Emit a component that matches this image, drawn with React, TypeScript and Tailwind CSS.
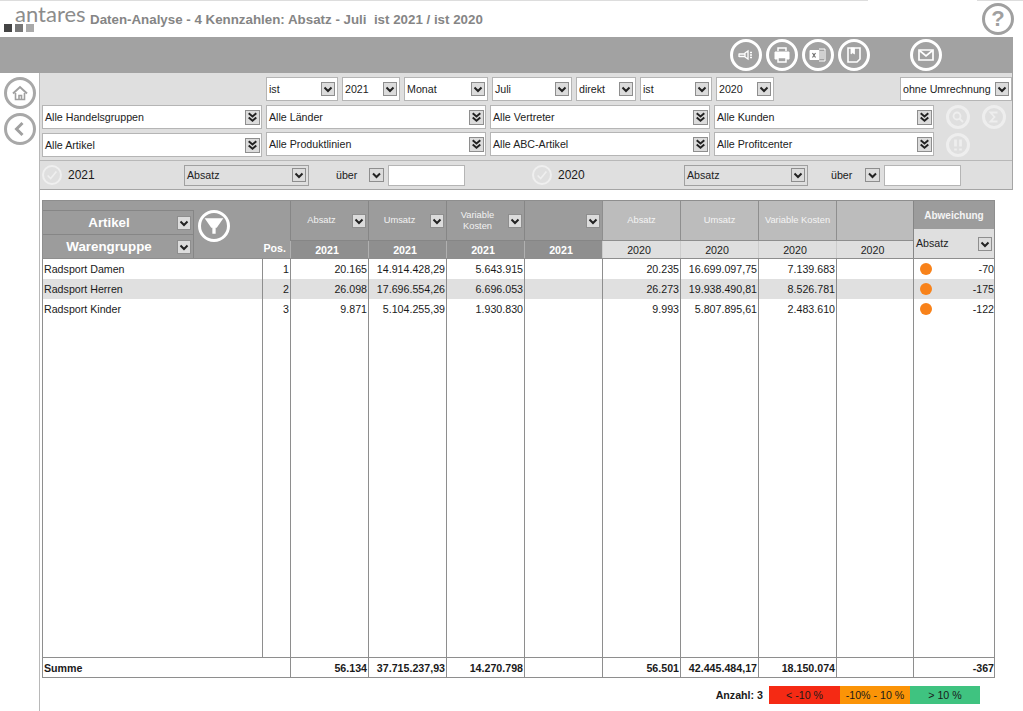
import React from 'react';

const COLS = 'grid grid-cols-[219px_28px_78px_78px_78px_78px_78px_78px_78px_77px_81px]';

const Chev = ({ double }: { double?: boolean }) => (
  <svg viewBox="0 0 12 12" className="w-full h-full">
    {double ? (
      <>
        <path d="M2.5 2 6 5 9.500 2" fill="none" stroke="#222" strokeWidth="1.800" />
        <path d="M2.500 6 6 9 9.500 6" fill="none" stroke="#222" strokeWidth="1.800" />
      </>
    ) : (
      <path d="M2.500 4.500 6 8 9.500 4.500" fill="none" stroke="#222" strokeWidth="2" />
    )}
  </svg>
);

const DropBtn = ({ double, cls }: { double?: boolean; cls?: string }) => (
  <div className={`shrink-0 border border-[#8e8e8e] bg-[#dcdcdc] ${double ? 'w-[15px] h-[15px]' : 'w-[14px] h-[14px]'} ${cls ?? ''}`}>
    <Chev double={double} />
  </div>
);

const Sel = ({ label, w, double, dim }: { label: string; w: string; double?: boolean; dim?: boolean }) => (
  <div className={`${w} shrink-0 flex items-center justify-between border pl-[2px] ${double ? 'pr-px' : 'pr-[2px]'} ${dim ? 'h-[21px] bg-[#dfdfdf] border-[#a0a0a0]' : 'h-[24px] bg-white border-[#b5b5b5]'}`}>
    <span className="text-[10.67px] text-[#222] whitespace-nowrap">{label}</span>
    <DropBtn double={double} />
  </div>
);

const Circle = ({ children, cls }: { children: React.ReactNode; cls: string }) => (
  <div className={`rounded-full flex items-center justify-center shrink-0 ${cls}`}>{children}</div>
);

const ToolBtn = ({ children, cls }: { children: React.ReactNode; cls?: string }) => (
  <Circle cls={`w-[32px] h-[32px] border-[3px] border-white ${cls ?? ''}`}>
    <svg viewBox="0 0 20 20" className="w-[20px] h-[20px]" fill="none" stroke="white">
      {children}
    </svg>
  </Circle>
);

const SideBtn = ({ children }: { children: React.ReactNode }) => (
  <Circle cls="w-[32px] h-[32px] border-[3px] border-[#a8a8a8]">
    <svg viewBox="0 0 20 20" className="w-[20px] h-[20px]" fill="none" stroke="#a0a0a0" strokeWidth="2">
      {children}
    </svg>
  </Circle>
);

const PaleBtn = ({ children }: { children: React.ReactNode }) => (
  <Circle cls="w-[24px] h-[24px] border-[3px] border-[#eeeeee]">
    <svg viewBox="0 0 16 16" className="w-[16px] h-[16px]" fill="none" stroke="#eeeeee" strokeWidth="1.800">
      {children}
    </svg>
  </Circle>
);

const CheckIcon = () => (
  <Circle cls="w-[20px] h-[20px] border-2 border-[#efefef]">
    <svg viewBox="0 0 16 16" className="w-[14px] h-[14px]" fill="none" stroke="#efefef" strokeWidth="1.800">
      <path d="M3 8.500 6.500 12 13 4" />
    </svg>
  </Circle>
);

const rows = [
  { name: 'Radsport Damen', pos: '1', a: '20.165', b: '14.914.428,29', c: '5.643.915', d: '20.235', e: '16.699.097,75', f: '7.139.683', dev: '-70' },
  { name: 'Radsport Herren', pos: '2', a: '26.098', b: '17.696.554,26', c: '6.696.053', d: '26.273', e: '19.938.490,81', f: '8.526.781', dev: '-175' },
  { name: 'Radsport Kinder', pos: '3', a: '9.871', b: '5.104.255,39', c: '1.930.830', d: '9.993', e: '5.807.895,61', f: '2.483.610', dev: '-122' },
];

const Cell = ({ children, cls }: { children?: React.ReactNode; cls?: string }) => (
  <div className={`border-l border-[#8e8e8e] text-right leading-[20px] whitespace-nowrap ${cls ?? 'pr-px'}`}>{children}</div>
);

const HeadCols = () => (
  <div className="flex flex-col">
    <div className="flex h-[40px]">
      {['Absatz', 'Umsatz', 'Variable Kosten', ''].map((t, i) => (
        <div key={i} className="w-[78px] flex items-center justify-end border-l border-b border-[#868686] bg-[#9c9c9c] pr-[2px]">
          <span className="flex-1 text-center text-[9.33px] leading-[11px] text-[#f2f2f2] px-[8px]">{t}</span>
          <DropBtn />
        </div>
      ))}
      {['Absatz', 'Umsatz', 'Variable Kosten', ''].map((t, i) => (
        <div key={i} className={`${i === 3 ? 'w-[77px]' : 'w-[78px]'} flex items-center justify-center border-l border-b border-[#8e8e8e] bg-[#bcbcbc] text-[9.33px] text-[#f4f4f4] whitespace-nowrap`}>
          {t}
        </div>
      ))}
    </div>
    <div className="flex h-[17px]">
      {[0, 1, 2, 3].map((i) => (
        <div key={i} className="w-[78px] flex items-center justify-center border-l border-[#b0b0b0] bg-[#8f8f8f] pr-[5px] text-[10.67px] font-bold text-white">
          2021
        </div>
      ))}
      {[0, 1, 2, 3].map((i) => (
        <div key={i} className={`${i === 3 ? 'w-[77px]' : 'w-[78px]'} flex items-center justify-center border-l border-[#cccccc] bg-[#dfdfdf] pr-[5px] text-[10.67px] text-[#222]`}>
          2020
        </div>
      ))}
    </div>
  </div>
);

export default function App() {
  return (
    <div className="w-[1023px] h-[711px] overflow-hidden bg-white flex flex-col text-[10.67px] text-[#1a1a1a] font-['Liberation_Sans',Arial,sans-serif]">
      {/* top hairline */}
      <div className="h-px flex shrink-0">
        <div className="w-[868px] bg-[#dddddd]" />
        <div className="w-[109px]" />
        <div className="flex-1 bg-[#dddddd]" />
      </div>

      {/* logo + title */}
      <div className="h-[36px] shrink-0 flex items-start">
        <div className="w-[90px] shrink-0 pl-[4px] pt-[3px] flex flex-col">
          <span className="pl-[11px] h-[20px] text-[22px] leading-[20px] text-[#8c8c8c] font-['Lato',sans-serif]">antares</span>
          <div className="flex gap-[3px]">
            <div className="w-[8px] h-[8px] bg-[#444444]" />
            <div className="w-[8px] h-[8px] bg-[#777777]" />
            <div className="w-[8px] h-[8px] bg-[#aaaaaa]" />
          </div>
        </div>
        <div className="flex-1 pt-[11px] text-[13.33px] leading-[15px] font-bold text-[#858585] whitespace-pre">
          Daten-Analyse - 4 Kennzahlen: Absatz - Juli  ist 2021 / ist 2020
        </div>
        <Circle cls="w-[32px] h-[32px] mt-[2px] mr-[9px] border-[3px] border-[#a0a0a0] text-[#a0a0a0] text-[22px] font-bold leading-none">?</Circle>
      </div>

      {/* toolbar */}
      <div className="h-[36px] shrink-0 mr-[10px] bg-[#a2a2a2] flex items-center pl-[730px] gap-[4px]">
        <ToolBtn>
          <path d="M3 9h6M3 11.500h6M3 8.500v3.500M9 8l3-2v8l-3-2zM14 7.500h2M14 10h2M14 12.500h2" strokeWidth="1.300" />
        </ToolBtn>
        <ToolBtn>
          <path d="M6 6V3h8v3" strokeWidth="1.500" />
          <path d="M3 7h14v7h-2.500v-2h-9v2H3z" fill="white" strokeWidth="1" />
          <path d="M6 12.500h8V17H6z" strokeWidth="1.500" />
        </ToolBtn>
        <ToolBtn>
          <path d="M2 5.500h9v9H2z" fill="white" strokeWidth="1" />
          <path d="M4.500 8l3 4.500M7.500 8l-3 4.500" stroke="#666" strokeWidth="1.100" />
          <path d="M11 4h6v12h-6M12 7h4M12 9h4M12 11h4M12 13h4" strokeWidth="1" />
        </ToolBtn>
        <ToolBtn>
          <path d="M4 3h12v11l-3 3H4z" strokeWidth="1.600" />
          <path d="M7 3h3.500v6L8.700 7.800 7 9z" fill="white" strokeWidth="0.800" />
        </ToolBtn>
        <ToolBtn cls="ml-[36px]">
          <path d="M3 5h14v10H3z" strokeWidth="1.700" />
          <path d="M3.500 5.500 10 11l6.500-5.500" strokeWidth="1.700" />
        </ToolBtn>
      </div>

      <div className="flex-1 flex min-h-0">
        {/* left rail */}
        <div className="w-[40px] shrink-0 border-r border-[#b8b8b8] pl-[4px] pt-[4px] flex flex-col gap-[4px]">
          <SideBtn>
            <path d="M3 10.500 10 4l7 6.500" />
            <path d="M5.500 10v6.500h9V10M9 16.500v-4h2.500v4" strokeWidth="1.600" />
          </SideBtn>
          <SideBtn>
            <path d="M12.500 4 6.500 10l6 6" strokeWidth="3" />
          </SideBtn>
        </div>

        <div className="flex-1 flex flex-col min-w-0">
          {/* filter panel */}
          <div className="mr-[10px] h-[117px] shrink-0 bg-[#dfdfdf] border-r border-b border-[#a5a5a5] flex flex-col">
            <div className="pt-[4px] pl-[226px] flex gap-[4px]">
              <Sel label="ist" w="w-[72px]" />
              <Sel label="2021" w="w-[58px]" />
              <Sel label="Monat" w="w-[84px]" />
              <Sel label="Juli" w="w-[80px]" />
              <Sel label="direkt" w="w-[60px]" />
              <Sel label="ist" w="w-[72px]" />
              <Sel label="2020" w="w-[58px]" />
              <div className="ml-[122px]">
                <Sel label="ohne Umrechnung" w="w-[112px]" />
              </div>
            </div>
            <div className="mt-[4px] pl-[2px] flex gap-[4px]">
              <Sel label="Alle Handelsgruppen" w="w-[220px]" double />
              <Sel label="Alle Länder" w="w-[220px]" double />
              <Sel label="Alle Vertreter" w="w-[220px]" double />
              <Sel label="Alle Kunden" w="w-[220px]" double />
              <div className="ml-[8px] flex gap-[12px]">
                <PaleBtn>
                  <circle cx="7" cy="7" r="3.500" />
                  <path d="M9.500 9.500 13 13" />
                </PaleBtn>
                <PaleBtn>
                  <path d="M11.500 3.500h-7L8.500 8l-4 4.500h7" />
                </PaleBtn>
              </div>
            </div>
            <div className="mt-[3px] pl-[2px] flex gap-[4px] h-[25px]">
              <div className="mt-px">
                <Sel label="Alle Artikel" w="w-[220px]" double />
              </div>
              <Sel label="Alle Produktlinien" w="w-[220px]" double />
              <Sel label="Alle ABC-Artikel" w="w-[220px]" double />
              <Sel label="Alle Profitcenter" w="w-[220px]" double />
              <div className="ml-[8px] mt-px">
                <PaleBtn>
                  <path d="M5.500 2.500v7M10.500 2.500v7" strokeWidth="2.800" />
                  <path d="M5.500 11.500v2M10.500 11.500v2" strokeWidth="2.600" />
                </PaleBtn>
              </div>
            </div>
            <div className="mt-[3px] flex-1 border-t border-[#b8b8b8] flex items-center pl-[2px]">
              <div className="w-[492px] flex items-center">
                <CheckIcon />
                <span className="ml-[6px] w-[116px] text-[12px]">2021</span>
                <Sel label="Absatz" w="w-[125px]" dim />
                <span className="ml-[27px] w-[33px]">über</span>
                <DropBtn cls="w-[15px]" />
                <div className="ml-[4px] w-[77px] h-[21px] bg-white border border-[#b5b5b5]" />
              </div>
              <div className="w-[478px] flex items-center ml-[-2px]">
                <CheckIcon />
                <span className="ml-[6px] w-[126px] text-[12px]">2020</span>
                <Sel label="Absatz" w="w-[124px]" dim />
                <span className="ml-[23px] w-[34px]">über</span>
                <DropBtn cls="w-[15px]" />
                <div className="ml-[4px] w-[77px] h-[21px] bg-white border border-[#b5b5b5]" />
              </div>
            </div>
          </div>

          {/* table */}
          <div className="ml-[2px] mt-[10px] w-[953px] h-[478px] shrink-0 border border-[#8e8e8e] flex flex-col">
            <div className="h-[57px] shrink-0 flex">
              <div className="w-[247px] bg-[#9c9c9c] pt-[9px] flex">
                <div className="w-[151px] flex flex-col">
                  {['Artikel', 'Warengruppe'].map((t) => (
                    <div key={t} className="h-[24px] flex items-center border-t border-r border-[#868686] pr-[2px]">
                      <span className="flex-1 text-center pr-[2px] text-[13.33px] font-bold text-white">{t}</span>
                      <DropBtn />
                    </div>
                  ))}
                </div>
                <Circle cls="ml-[4px] w-[32px] h-[32px] border-[3px] border-white">
                  <svg viewBox="0 0 20 20" className="w-[22px] h-[22px]" fill="white">
                    <path d="M1.500 3h17l-6 8.500h-5zM8.500 11h3v6h-3z" />
                  </svg>
                </Circle>
                <div className="flex-1 self-end pr-[4px] pb-[2px] text-right font-bold text-white">Pos.</div>
              </div>
              <HeadCols />
              <div className="w-[81px] flex flex-col border-l border-[#868686]">
                <div className="h-[28px] bg-[#9c9c9c] flex items-center justify-center text-[10px] font-bold text-[#f4f4f4]">Abweichung</div>
                <div className="flex-1 bg-[#dfdfdf] flex items-center justify-between pl-[2px] pr-[2px] text-[#222]">
                  <span className="mb-[2px]">Absatz</span>
                  <DropBtn />
                </div>
              </div>
            </div>

            <div className="border-t border-[#8e8e8e]" />
            {rows.map((r, i) => (
              <div key={r.name} className={`${COLS} h-[20px] shrink-0 ${i === 1 ? 'bg-[#e0e0e0]' : ''}`}>
                <div className="pl-[1px] leading-[20px] whitespace-nowrap">{r.name}</div>
                <Cell>{r.pos}</Cell>
                <Cell>{r.a}</Cell>
                <Cell>{r.b}</Cell>
                <Cell>{r.c}</Cell>
                <Cell />
                <Cell>{r.d}</Cell>
                <Cell>{r.e}</Cell>
                <Cell>{r.f}</Cell>
                <Cell />
                <Cell cls="flex items-center justify-between pl-[6px] pr-0">
                  <span className="w-[12px] h-[12px] rounded-full bg-[#f8821a]" />
                  <span>{r.dev}</span>
                </Cell>
              </div>
            ))}
            <div className={`${COLS} flex-1`}>
              <div />
              {[0, 1, 2, 3, 4, 5, 6, 7, 8, 9].map((i) => (
                <Cell key={i} />
              ))}
            </div>
            <div className={`${COLS} h-[20px] shrink-0 border-t border-[#8e8e8e] font-bold`}>
              <div className="col-span-2 pl-[1px] leading-[20px]">Summe</div>
              <Cell>56.134</Cell>
              <Cell>37.715.237,93</Cell>
              <Cell>14.270.798</Cell>
              <Cell />
              <Cell>56.501</Cell>
              <Cell>42.445.484,17</Cell>
              <Cell>18.150.074</Cell>
              <Cell />
              <Cell cls="pr-0">-367</Cell>
            </div>
          </div>

          {/* legend */}
          <div className="mt-[8px] flex items-center justify-end pr-[43px] h-[18px]">
            <span className="mr-[6px] font-bold">Anzahl: 3</span>
            <div className="w-[71px] h-full bg-[#f52a14] flex items-center justify-center">&lt; -10 %</div>
            <div className="w-[70px] h-full bg-[#fb9407] flex items-center justify-center">-10% - 10 %</div>
            <div className="w-[70px] h-full bg-[#3fc380] flex items-center justify-center">&gt; 10 %</div>
          </div>
        </div>
      </div>
    </div>
  );
}
